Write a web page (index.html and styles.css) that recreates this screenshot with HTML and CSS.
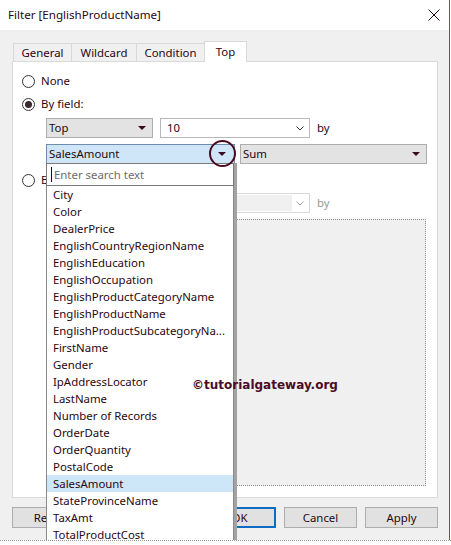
FILE: index.html
```html
<!DOCTYPE html>
<html>
<head>
<meta charset="utf-8">
<link rel="stylesheet" href="styles.css">
</head>
<body>
<div class="win">
  <div class="titlebar">
    <span class="title">Filter [EnglishProductName]</span>
    <svg class="close" width="12" height="12" viewBox="0 0 12 12"><path d="M0.5 0.5 L11.5 11.5 M11.5 0.5 L0.5 11.5" stroke="#2a0612" stroke-width="1" fill="none"/></svg>
  </div>
  <div class="content">
    <div class="tabs">
      <div class="tab t-general">General</div>
      <div class="tab t-wild">Wildcard</div>
      <div class="tab t-cond">Condition</div>
      <div class="tab t-top active">Top</div>
    </div>
    <div class="panel">
      <div class="radio-row first"><span class="radio"></span><span>None</span></div>
      <div class="radio-row second"><span class="radio checked"></span><span>By field:</span></div>
      <div class="ctl-row r1">
        <div class="combo gray w-top"><span>Top</span><span class="tri"></span></div>
        <div class="combo white w-num"><span>10</span><svg class="chev" width="8" height="5" viewBox="0 0 8 5"><path d="M0.5 0.5 L4 4 L7.5 0.5" stroke="#3a2a30" stroke-width="1" fill="none"/></svg></div>
        <span class="by">by</span>
      </div>
      <div class="ctl-row r2">
        <div class="combo open w-field"><span>SalesAmount</span><span class="tri"></span></div>
        <div class="combo gray w-agg"><span>Sum</span><span class="tri"></span></div>
      </div>
      <div class="radio-row third"><span class="radio"></span><span>By formula:</span></div>
      <div class="ctl-row r3">
        <div class="combo disabled w-top"><span class="dfield"></span></div>
        <div class="combo disabled w-num"><span class="dfield"></span><svg class="chev" width="8" height="5" viewBox="0 0 8 5"><path d="M0.5 0.5 L4 4 L7.5 0.5" stroke="#a0a0a0" stroke-width="1" fill="none"/></svg></div>
        <span class="by dim">by</span>
      </div>
      <div class="formula-box"></div>
    </div>
    <div class="buttons">
      <div class="btn">Reset</div>
      <div class="btn-group">
        <div class="btn default">OK</div>
        <div class="btn">Cancel</div>
        <div class="btn">Apply</div>
      </div>
    </div>
  </div>

  <div class="dropdown">
    <div class="search"><span class="caret"></span><span class="placeholder">Enter search text</span></div>
    <ul class="list">
      <li>City</li>
      <li>Color</li>
      <li>DealerPrice</li>
      <li>EnglishCountryRegionName</li>
      <li>EnglishEducation</li>
      <li>EnglishOccupation</li>
      <li>EnglishProductCategoryName</li>
      <li>EnglishProductName</li>
      <li>EnglishProductSubcategoryNa...</li>
      <li>FirstName</li>
      <li>Gender</li>
      <li>IpAddressLocator</li>
      <li>LastName</li>
      <li>Number of Records</li>
      <li>OrderDate</li>
      <li>OrderQuantity</li>
      <li>PostalCode</li>
      <li class="hl">SalesAmount</li>
      <li>StateProvinceName</li>
      <li>TaxAmt</li>
      <li>TotalProductCost</li>
    </ul>
  </div>
  <div class="annot"></div>
  <div class="watermark">©tutorialgateway.org</div>
</div>
<div class="bottom-line"></div>
</body>
</html>
```
FILE: styles.css
```css
* { box-sizing: border-box; }
html, body { margin: 0; padding: 0; }
body {
  width: 451px;
  height: 545px;
  overflow: hidden;
  background: #ffffff;
  font-family: "Noto Sans", "Open Sans", sans-serif;
  font-size: 11.4px;
  color: #2a0612;
}
.win {
  position: relative;
  width: 450px;
  height: 540px;
  background: #f0f0f0;
  border-right: 1px solid #1c69b8;
  overflow: hidden;
}
.bottom-line {
  height: 1px;
  border-top: 1px dotted #9a9a9a;
}
.titlebar {
  height: 30px;
  background: #ffffff;
  display: flex;
  align-items: center;
  justify-content: space-between;
  padding: 0 9px 0 8px;
}
.title { line-height: 16px; margin-top: -1px; font-size: 11.6px; }
.close { display: block; margin-top: -1px; }

.content { padding: 0 0 0 12px; }

.tabs {
  display: flex;
  align-items: flex-start;
  height: 21px;
  margin-top: 11px;
  margin-bottom: -1px;
  padding-left: 1px;
  position: relative;
  z-index: 1;
}
.tab {
  height: 18px;
  margin-top: 2px;
  border: 1px solid #d9d9d9;
  border-bottom: none;
  margin-right: -1px;
  background: #f0f0f0;
  text-align: center;
  line-height: 17px;
}
.t-general { width: 59px; }
.t-wild { width: 66px; }
.t-cond { width: 69px; }
.t-top { width: 43px; }
.tab.active {
  height: 21px;
  margin-top: 0;
  background: #ffffff;
  line-height: 19px;
}

.panel {
  width: 426px;
  height: 437px;
  background: #ffffff;
  border: 1px solid #d9d9d9;
  padding: 0 0 0 9px;
}
.radio-row {
  display: flex;
  align-items: center;
  height: 16px;
  gap: 6px;
  line-height: 16px;
}
.radio-row.first { margin-top: 11px; }
.radio-row.second { margin-top: 7px; }
.radio-row.third { margin-top: 8px; }
.radio {
  width: 13px;
  height: 13px;
  border-radius: 50%;
  border: 1px solid #333333;
  background: #ffffff;
  display: flex;
  align-items: center;
  justify-content: center;
}
.radio.checked::after {
  content: "";
  width: 7px;
  height: 7px;
  border-radius: 50%;
  background: #3a2a30;
}
.ctl-row {
  display: flex;
  align-items: center;
  margin-left: 24px;
  height: 20px;
}
.ctl-row.r1 { margin-top: 6px; gap: 7px; }
.ctl-row.r2 { margin-top: 6px; gap: 5px; }
.ctl-row.r3 { margin-top: 5px; gap: 7px; }
.combo {
  height: 20px;
  display: flex;
  align-items: center;
  justify-content: space-between;
  line-height: 16px;
}
.combo.gray {
  background: #e3e3e3;
  border: 1px solid #adadad;
  padding: 0 6px 0 2px;
}
.combo.white {
  background: #ffffff;
  border: 1px solid #b8b8b8;
  padding: 0 5px 0 6px;
}
.combo.open {
  background: #cfe6f8;
  border: 1px solid #6f8cac;
  padding: 0 8px 0 2px;
}
.combo.disabled {
  background: #ffffff;
  border: 1px solid #d9d9d9;
  padding: 1px 5px 1px 1px;
}
.combo.disabled .dfield {
  flex: 1;
  align-self: stretch;
  background: #f0f0f0;
  margin-right: 4px;
}
.w-top { width: 107px; }
.w-num { width: 150px; }
.w-field { width: 189px; }
.w-agg { width: 187px; }
.tri {
  width: 0;
  height: 0;
  border-left: 4px solid transparent;
  border-right: 4px solid transparent;
  border-top: 4px solid #3a0a1e;
}
.chev { display: block; }
.by { line-height: 16px; margin-top: -1px; }
.by.dim { color: #9a9a9a; }
.formula-box {
  margin-top: 6px;
  margin-left: 24px;
  width: 380px;
  height: 267px;
  background: #f0f0f0;
  border: 1px dotted #8f8f8f;
}

.buttons {
  display: flex;
  width: 426px;
  margin-top: 9px;
}
.btn-group {
  margin-left: auto;
  display: flex;
  gap: 8px;
}
.btn {
  width: 73px;
  height: 21px;
  background: #e1e1e1;
  border: 1px solid #adadad;
  text-align: center;
  line-height: 19px;
}
.btn.default {
  border: 2px solid #0f6cc2;
  line-height: 17px;
}

.dropdown {
  position: absolute;
  left: 46px;
  top: 163px;
  width: 188px;
  height: 400px;
  background: #ffffff;
  border: 1px solid #8a8a8a;
  border-top: none;
  box-shadow: 3px 0 0 #a3a3a3;
  z-index: 5;
}
.search {
  height: 23px;
  border: 1px solid #7a7a7a;
  margin: 0 -1px;
  display: flex;
  align-items: center;
  padding-left: 4px;
}
.caret {
  width: 1px;
  height: 15px;
  background: #2a0612;
  margin-right: 2px;
}
.placeholder { color: #6d6d6d; line-height: 16px; }
.list {
  list-style: none;
  margin: 0;
  padding: 0;
}
.list li {
  height: 17px;
  line-height: 17px;
  padding-left: 6px;
  white-space: nowrap;
}
.list li.hl { background: #cde6f8; }

.annot {
  position: absolute;
  left: 209px;
  top: 140px;
  width: 27px;
  height: 27px;
  border: 2.5px solid #4a0a22;
  border-radius: 50%;
  z-index: 6;
}
.watermark {
  position: absolute;
  left: 192px;
  top: 377px;
  font-family: "DejaVu Sans", sans-serif;
  font-weight: bold;
  font-size: 12px;
  line-height: 16px;
  color: #4a0c26;
  z-index: 7;
}
```
